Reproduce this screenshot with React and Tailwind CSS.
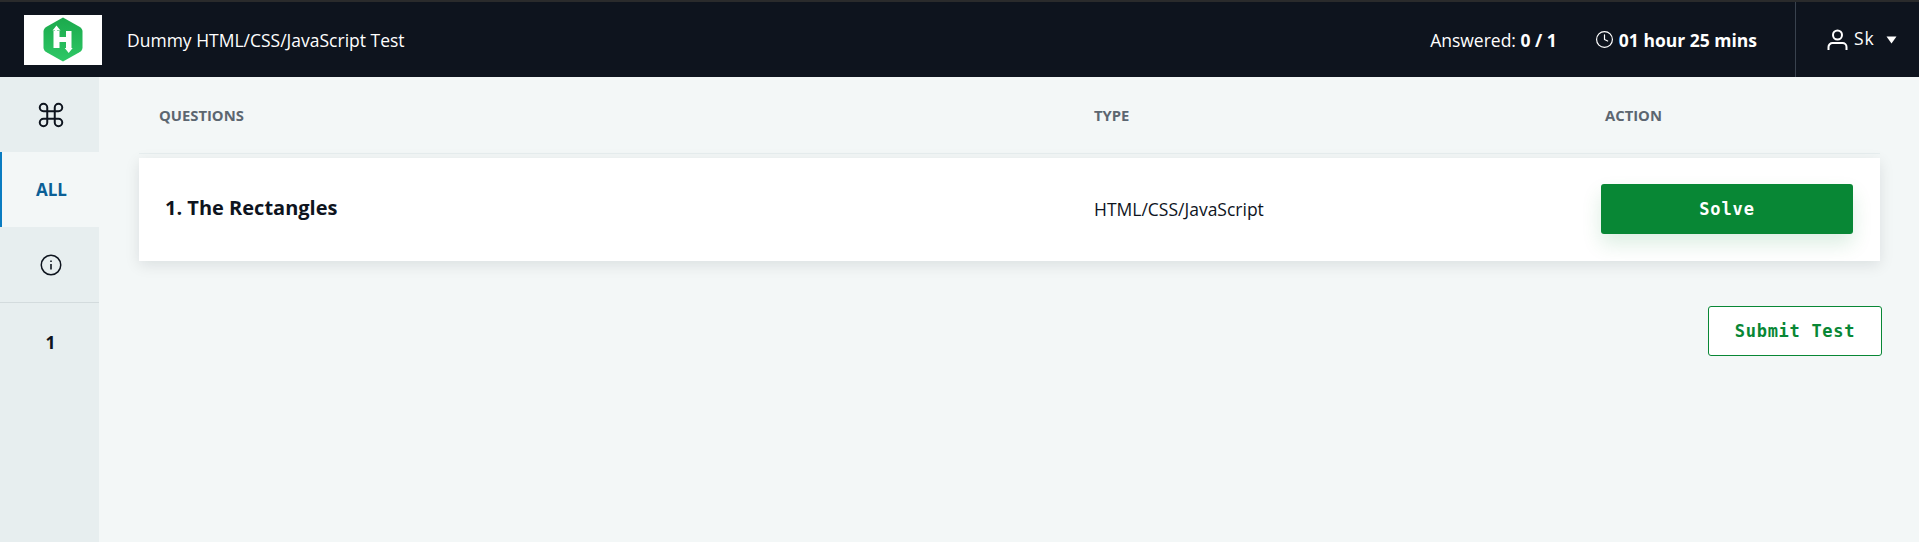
import React from "react";
import { Clock, Command } from "lucide-react";

function Logo() {
    return (
        <div className="w-[78px] h-[50px] bg-white flex items-center justify-center">
            <svg width="40" height="45" viewBox="0 0 40 45">
                <defs>
                    <linearGradient id="hex" x1="0" y1="0" x2="0" y2="1">
                        <stop offset="0" stopColor="#1ba94c" />
                        <stop offset="1" stopColor="#2ec866" />
                    </linearGradient>
                </defs>
                <path d="M20 0.5 L36 9.5 Q39.5 11.5 39.5 14.5 L39.5 30.5 Q39.5 33.5 36 35.5 L20 44.5 L4 35.5 Q0.5 33.5 0.5 30.5 L0.5 14.5 Q0.5 11.5 4 9.5 Z" fill="url(#hex)" />
                <path d="M10.5 14 H12 V13 H14 V14 H16.5 V20 H23 V14 H28.5 V31 H23 V25 H16.5 V31 H10.5 Z" fill="#fff" />
                <path d="M13.5 8.5 L17.5 13.5 H9.5 Z M25.7 36 L21.7 31 H29.7 Z" fill="#fff" />
            </svg>
        </div>
    );
}

function SideCell({ children, className = "" }) {
    return <div className={`h-[75px] flex items-center justify-center ${className}`}>{children}</div>;
}

export default function App() {
    return (
        <div className="h-[542px] flex flex-col bg-[#f3f7f7] font-['Open_Sans',sans-serif] text-[#0e141e] overflow-hidden">
            <header className="h-[77px] shrink-0 bg-[#0e141e] border-t-2 border-[#2a2b2c] flex items-center text-white">
                <div className="ml-6">
                    <Logo />
                </div>
                <div className="ml-[25px] text-[17.5px] leading-6">Dummy HTML/CSS/JavaScript Test</div>
                <div className="ml-auto text-[17.5px] leading-6">
                    Answered: <span className="font-bold">0 / 1</span>
                </div>
                <div className="ml-[38px] flex items-center gap-[5px]">
                    <Clock size={19} strokeWidth={1.5} />
                    <span className="text-[17.5px] leading-6 font-bold">01 hour 25 mins</span>
                </div>
                <div className="ml-[38px] w-[124px] self-stretch border-l border-[#39424e] flex items-center pl-[31px]">
                    <svg width="21" height="22" viewBox="0 0 21 22" fill="none" stroke="#fff" strokeWidth="2">
                        <circle cx="10.5" cy="6" r="4.5" />
                        <path d="M1.5 21 V18 A4 4 0 0 1 5.5 14 H15.5 A4 4 0 0 1 19.5 18 V21" />
                    </svg>
                    <span className="ml-[6px] text-[17.5px] leading-6 tracking-[1px] -mt-1">Sk</span>
                    <svg className="ml-[11px]" width="11" height="8" viewBox="0 0 11 8">
                        <path d="M0.5 0.5 H10.5 L5.5 7.5 Z" fill="#fff" />
                    </svg>
                </div>
            </header>

            <div className="flex-1 flex min-h-0">
                <aside className="w-[99px] shrink-0 bg-[#e7eeef] flex flex-col">
                    <SideCell className="pl-[2px]">
                        <Command size={30} strokeWidth={1.6} />
                    </SideCell>
                    <SideCell className="bg-[#f3f7f7] border-l-2 border-[#0a7cc1] pl-[2px] pt-px text-[17px] font-bold text-[#0b5f96]">ALL</SideCell>
                    <SideCell className="h-[76px] pl-[2px] border-b border-[#d3dbdd]">
                        <svg width="22" height="22" viewBox="0 0 22 22" fill="none" stroke="currentColor">
                            <circle cx="11" cy="11" r="9.75" strokeWidth="1.5" />
                            <path d="M11 10 V15.5" strokeWidth="1.6" />
                            <path d="M11 6.5 V8" strokeWidth="1.6" />
                        </svg>
                    </SideCell>
                    <SideCell className="pl-[2px] pt-[3px] text-[17.5px] font-bold">1</SideCell>
                </aside>

                <main className="flex-1 flex flex-col pl-10 pr-[37px]">
                    <div className="h-[77px] flex items-center text-[14.8px] font-bold text-[#5c6670] border-b border-[#e7eeef] mr-[2px]">
                        <div className="w-[955px] pl-5">QUESTIONS</div>
                        <div className="w-[511px]">TYPE</div>
                        <div>ACTION</div>
                    </div>
                    <div className="mt-1 h-[103px] mr-[2px] bg-white shadow-[0_4px_14px_rgba(14,20,30,0.1)] flex items-center">
                        <div className="w-[955px] pl-[26px] text-[20px] font-bold -mt-[3px]">1. The Rectangles</div>
                        <div className="w-[507px] text-[17.5px]">HTML/CSS/JavaScript</div>
                        <button className="w-[252px] h-[50px] -mt-px pt-px bg-[#088735] rounded-[3px] text-white font-['DejaVu_Sans_Mono',monospace] font-bold text-[17px] tracking-[0.9px] shadow-[0_10px_20px_rgba(8,135,53,0.14)]">
                            Solve
                        </button>
                    </div>
                    <div className="mt-[45px] flex justify-end">
                        <button className="w-[174px] h-[50px] pt-[2px] bg-white border border-[#088735] rounded-[3px] text-[#088735] font-['DejaVu_Sans_Mono',monospace] font-bold text-[17px] tracking-[0.7px]">
                            Submit Test
                        </button>
                    </div>
                </main>
            </div>
        </div>
    );
}
